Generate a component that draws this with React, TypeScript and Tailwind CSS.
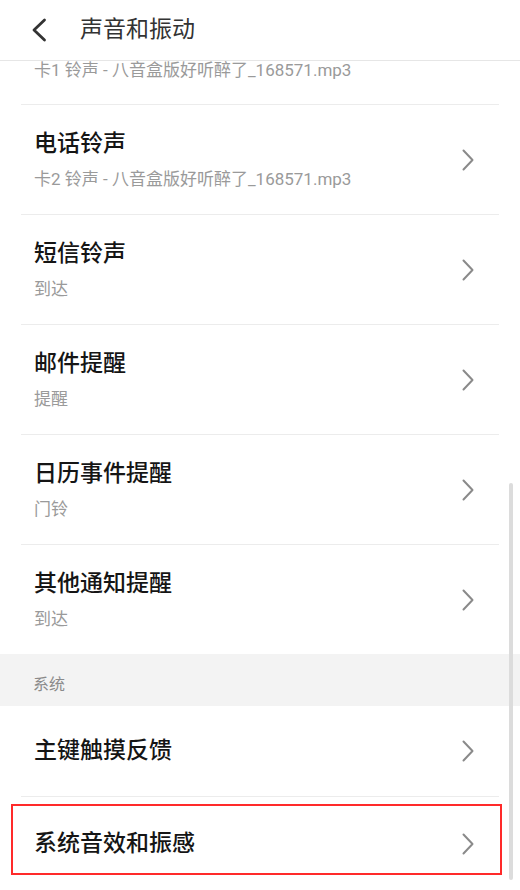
import React from "react";

const font = { fontFamily: 'Roboto, "Noto Sans CJK SC", "Noto Sans", sans-serif' };

function Chevron() {
  return (
    <svg width="12" height="22" viewBox="0 0 12 22" fill="none" className="shrink-0">
      <path d="M1.5 1.5 L10.5 11 L1.5 20.5" stroke="#8a8a8a" strokeWidth="2" strokeLinecap="round" strokeLinejoin="round" />
    </svg>
  );
}

function Divider() {
  return <div className="mx-[21px] h-px bg-[#ececec]" />;
}

function TwoLineRow({ title, sub, last }: { title: string; sub: string; last?: boolean }) {
  return (
    <>
      <div className="flex items-center h-[109px] pl-[34px] pr-[46px]">
        <div className="flex-1 flex flex-col">
          <div className="h-[30px] leading-[30px] text-[23px] font-medium text-[#151515]">{title}</div>
          <div className="mt-[9px] h-[22px] leading-[22px] text-[17px] text-[#9a9a9a]">{sub}</div>
        </div>
        <Chevron />
      </div>
      {!last && <Divider />}
    </>
  );
}

export default function App() {
  return (
    <div className="relative w-[520px] h-[890px] overflow-hidden bg-white" style={font}>
      <div className="flex items-center h-[61px] border-b border-[#e6e6e6] bg-white">
        <svg width="16" height="24" viewBox="0 0 16 24" fill="none" className="ml-[31px]">
          <path d="M13.5 2 L3 12 L13.5 22" stroke="#333333" strokeWidth="2.8" strokeLinecap="round" strokeLinejoin="round" />
        </svg>
        <div className="ml-[33px] text-[23px] leading-[30px] text-[#333333]">声音和振动</div>
      </div>

      <div className="h-[43px] pl-[34px]">
        <div className="h-[18px] leading-[18px] text-[17px] text-[#9a9a9a]">卡1 铃声 - 八音盒版好听醉了_168571.mp3</div>
      </div>
      <Divider />

      <TwoLineRow title="电话铃声" sub="卡2 铃声 - 八音盒版好听醉了_168571.mp3" />
      <TwoLineRow title="短信铃声" sub="到达" />
      <TwoLineRow title="邮件提醒" sub="提醒" />
      <TwoLineRow title="日历事件提醒" sub="门铃" />
      <TwoLineRow title="其他通知提醒" sub="到达" last />

      <div className="h-[52px] bg-[#f3f3f3] flex items-center pl-[33px] pt-[10px]">
        <span className="text-[16px] text-[#8a8a8a]">系统</span>
      </div>

      <div className="flex items-center h-[90px] pl-[34px] pr-[46px]">
        <div className="flex-1 text-[23px] font-medium text-[#151515]">主键触摸反馈</div>
        <Chevron />
      </div>
      <Divider />

      <div className="relative flex items-center h-[94px] pl-[34px] pr-[46px]">
        <div className="flex-1 text-[23px] font-medium text-[#151515]">系统音效和振感</div>
        <Chevron />
        <div className="absolute left-[11px] top-[7px] w-[491px] h-[71px] border-2 border-[#ff2a2a]" />
      </div>

      <div className="absolute right-[7px] top-[483px] w-[4px] h-[397px] rounded-full bg-[#dcdcdc]" />
    </div>
  );
}
